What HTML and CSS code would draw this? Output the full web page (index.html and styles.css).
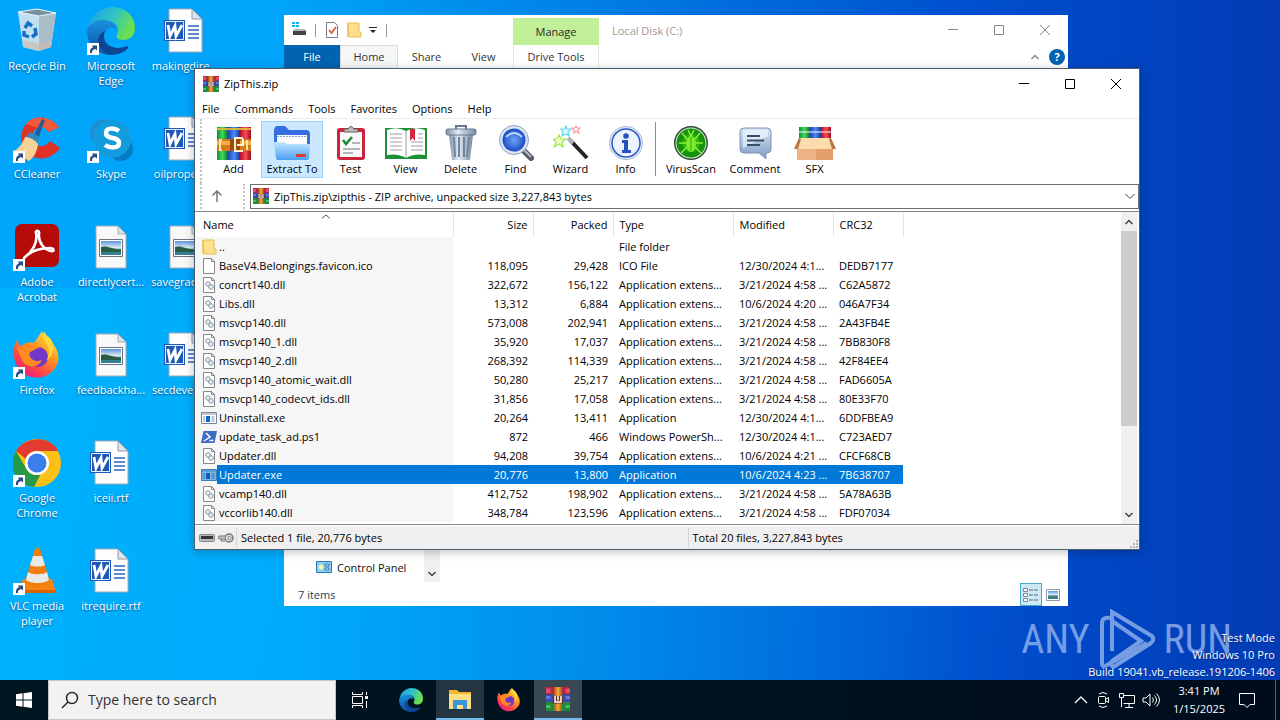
FILE: index.html
```html
<!DOCTYPE html>
<html lang="en">
<head>
<meta charset="utf-8">
<title>Desktop</title>
<link rel="stylesheet" href="styles.css">
</head>
<body>
<svg class="defs" aria-hidden="true">
  <defs>
    <linearGradient id="gEdge" x1="0" y1="0" x2="1" y2=".4"><stop offset="0" stop-color="#1b9de2"/><stop offset=".55" stop-color="#2fc2c9"/><stop offset="1" stop-color="#6be04f"/></linearGradient>
    <linearGradient id="gEdge2" x1="0" y1="0" x2="0" y2="1"><stop offset="0" stop-color="#1b90de"/><stop offset="1" stop-color="#0c4fa4"/></linearGradient>
    <linearGradient id="gFox" x1=".9" y1="0" x2=".2" y2="1"><stop offset="0" stop-color="#fff04a"/><stop offset=".4" stop-color="#ff9a1e"/><stop offset=".75" stop-color="#ff3f4a"/><stop offset="1" stop-color="#e8178c"/></linearGradient>
    <linearGradient id="gFold" x1="0" y1="0" x2="0" y2="1"><stop offset="0" stop-color="#c4e7ff"/><stop offset="1" stop-color="#4b9ff2"/></linearGradient>
    <linearGradient id="gSky" x1="0" y1="0" x2="0" y2="1"><stop offset="0" stop-color="#5d93dd"/><stop offset=".5" stop-color="#e4f1f5"/><stop offset=".6" stop-color="#49806a"/><stop offset="1" stop-color="#2f7fa8"/></linearGradient>
    <linearGradient id="gSteel" x1="0" y1="0" x2="1" y2="0"><stop offset="0" stop-color="#7e93aa"/><stop offset=".4" stop-color="#e3ebf3"/><stop offset="1" stop-color="#7488a0"/></linearGradient>
    <radialGradient id="gLens"><stop offset="0" stop-color="#6ea4f5"/><stop offset="1" stop-color="#1c4bc4"/></radialGradient>
    <linearGradient id="gGreen" x1="0" y1="0" x2="1" y2="0"><stop offset="0" stop-color="#0c9332"/><stop offset=".5" stop-color="#45d860"/><stop offset="1" stop-color="#087428"/></linearGradient>
    <linearGradient id="gBlue" x1="0" y1="0" x2="1" y2="0"><stop offset="0" stop-color="#1944b4"/><stop offset=".5" stop-color="#4f8bf4"/><stop offset="1" stop-color="#15389a"/></linearGradient>
    <linearGradient id="gRed" x1="0" y1="0" x2="1" y2="0"><stop offset="0" stop-color="#b30d28"/><stop offset=".5" stop-color="#fb4a55"/><stop offset="1" stop-color="#9c0a20"/></linearGradient>
    <linearGradient id="gCmt" x1="0" y1="0" x2="0" y2="1"><stop offset="0" stop-color="#d9e6f5"/><stop offset="1" stop-color="#7e9bc4"/></linearGradient>
  </defs>
  <symbol id="link" viewBox="0 0 12 12"><path d="M0 0h12v12H0z" fill="#fff"/><path d="M3 10C2.600 6.500 4 5 6 4.600L5 2.500h5v5L8.300 6.100C6 6.500 4.800 7.500 5 10z" fill="#284c86"/></symbol>
  <symbol id="bin" viewBox="0 0 48 48"><path d="M5 5 24 2l19 4-5 34-13 4-15-4z" fill="#d7e5ee" opacity=".9"/><path d="M26 8 43 6l-5 34-12 4z" fill="#a9bdc9"/><path d="M5 5 24 2l19 4-17 3z" fill="#76909f" stroke="#eef6fb"/><path d="M10 33l16 3 12-3v7l-12 4-16-4z" fill="#c9bdb4" opacity=".7"/><g fill="none" stroke="#1471c9" stroke-width="3.500"><path d="M12 21l3-5 4 3M22 21l1 6-4 3M16 30l-5-2 0-4"/></g></symbol>
  <symbol id="edge" viewBox="0 0 48 48"><path d="M1 22C3 9 12 1 25 0c13 0 23 9 23 21 0 8-5 12-12 12-5 0-8-3-6-6 4-6-2-13-11-13C11 14 4 17 1 22z" fill="url(#gEdge)"/><path d="M0 24C2 16 10 12 18 13c8 1 12 6 11 11-1-5-9-5-11 1-4 10 6 19 20 15 2-1 4-1 3 1-4 5-11 7-18 7C10 47 0 37 0 24z" fill="url(#gEdge2)"/><path d="M18 24c-5 11 5 20 20 16 4-1 4 0 2 2-8 7-20 7-26-1-5-6-3-14 4-17z" fill="#0b4594"/></symbol>
  <symbol id="word" viewBox="0 0 48 48"><path d="M8 2h23l10 10v33H8z" fill="#fdfdfd" stroke="#9fa8b4"/><path d="M31 2v10h10z" fill="#dfe3ea" stroke="#9298a5"/><path d="M27 19h11M27 23h11M27 27h11M27 31h11" stroke="#2a63bd" stroke-width="1.300"/><path d="M3 13h21v21H3z" fill="#1e58b6"/><path d="M4.500 14.500h18v18h-18z" fill="none" stroke="#e7effc"/><path d="m7 18 2 11 5-10 1 10 6-11" fill="none" stroke="#fff" stroke-width="2.800"/></symbol>
  <symbol id="photo" viewBox="0 0 48 48"><path d="M9 3h22l8 8v34H9z" fill="#f8f8f8" stroke="#a3adb5"/><path d="M31 3v8h8z" fill="#dce2e8" stroke="#a3adb5"/><path d="M12.500 16.500h23v17h-23z" fill="#fff" stroke="#697583"/><path d="M14 18h20v14H14z" fill="url(#gSky)"/><path d="M14 24c6-2 11 2 20 3v2H14z" fill="#295c43"/></symbol>
  <symbol id="cc" viewBox="0 0 48 48"><path d="M46 12C38 1 21-1 13 9 5 19 7 36 18 41c10 5 22 2 29-8l-10-7c-3 5-10 7-14 3-5-5-4-14 2-16 4-2 8 0 11 4z" fill="#e03224"/><path d="M46 12C38 1 21-1 13 9l12 4c4-2 8 0 11 4z" fill="#f0593d"/><path d="m29 4 3 1-7 19-5-2z" fill="#1d5f95"/><path d="m17 17 10 5-3 7-12-6z" fill="#3489be"/><path d="M12 22c5 0 10 3 13 7-1 8-4 13-9 17L0 36c6-2 9-7 12-14z" fill="#f5d296"/></symbol>
  <symbol id="skype" viewBox="0 0 48 48"><circle cx="17" cy="18" r="14" fill="#1c8fd6"/><circle cx="34" cy="34" r="12" fill="#087cc2"/><circle cx="25" cy="24" r="19" fill="#129cdd"/><path d="M32 16c-4-3-13-4-13 2 0 7 13 3 13 10 0 6-10 5-14 2" fill="none" stroke="#fff" stroke-width="4.500"/></symbol>
  <symbol id="pdf" viewBox="0 0 48 48"><rect x="2" y="1" width="44" height="43" rx="7" fill="#b50b08"/><path d="M12 34c7-5 13-14 11-24-1-3 4-3 3 1-1 9 6 16 12 17 4 1 3-3-1-3-9 0-18 3-24 8-3 2-2 3-1 1z" fill="none" stroke="#fff" stroke-width="2.600"/></symbol>
  <symbol id="fox" viewBox="0 0 48 48"><path d="M4 9l3 6 6-3c3-1 6-1 8 0l8-12c1 6 5 8 7 13l2-3c8 9 10 19 4 27-6 10-22 13-32 5C0 33-2 19 4 9z" fill="url(#gFox)"/><circle cx="25" cy="26" r="10" fill="#7038c8"/><path d="M4 17c8-4 19-4 23 0-5 0-6 3-10 4-2 6 4 11 12 8-4 9-17 8-20 0-1-4-3-7-5-12z" fill="#ff8a22"/><path d="M31 0c-3 7 1 11 3 14 4 6 1 13-1 16 9-7 9-17 4-23-3-2-5-4-6-7z" fill="#ffd83a"/></symbol>
  <symbol id="chrome" viewBox="0 0 48 48"><circle cx="24" cy="24" r="24" fill="#fbc116"/><path d="M3 12C11-2 37-5 45 12H24a12 12 0 0 0-11 8z" fill="#e33b2e"/><path d="M3 12 13.500 30c3 6 9 7 14 5.500L21 48C3 46-6 27 3 12z" fill="#269a48"/><circle cx="24" cy="24" r="12" fill="#fff"/><circle cx="24" cy="24" r="9.500" fill="#3b7ded"/></symbol>
  <symbol id="vlc" viewBox="0 0 48 48"><path d="M10 32h29l4 13q0 1-2 1H8q-2 0-2-1z" fill="#f58212"/><path d="M6 43h37v3H6z" fill="#d96300"/><path d="M22 2q2-3 5 0l10 33c-2 6-23 6-25 0z" fill="#f27d0d"/><path d="m20 9 9 0 3 9c-3 2-12 2-15 0zM15 25c4 3 15 3 19 0l2 8c-4 4-19 4-23 0z" fill="#e9e9ea"/></symbol>
  <symbol id="rar" viewBox="0 0 16 16"><path d="M0 0h16v5H0z" fill="#b32645"/><path d="M0 5h16v5H0z" fill="#3b4bb0"/><path d="M0 10h16v6H0z" fill="#1f8a3f"/><path d="M0 1h3v3H0zM13 1h3v3h-3z" fill="#df4d60"/><path d="M0 6h3v2H0zM13 6h3v2h-3z" fill="#6378e0"/><path d="M0 12h3v2H0zM13 12h3v2h-3z" fill="#46bb61"/><path d="M5.500 0h5v16h-5z" fill="#c8741d"/><path d="M7 0h2v16H7z" fill="#e9a03b"/><path d="M4.500 6h7v5h-7z" fill="#6d3515"/><path d="M6 6v4h4V6M8 6v3" fill="none" stroke="#fff"/></symbol>
  <symbol id="books" viewBox="0 0 36 36"><path d="M1 2h11v33H1z" fill="url(#gGreen)"/><path d="M12 2h12v33H12z" fill="url(#gBlue)"/><path d="M24 2h11v33H24z" fill="url(#gRed)"/><path d="M1 3h11v2H1zM12 3h12v2H12zM24 3h11v2H24z" fill="#e9b93c" opacity=".9"/><path d="M1 14h34v12H1z" fill="#d37b17"/><path d="M1 16h34v4H1z" fill="#f3af45"/><path d="M6 15H4v10h2M31 15v10" fill="none" stroke="#ffe5a0" stroke-width="2"/><path d="M14 14h10v12H14z" fill="#9c4b10"/><path d="M27 13h-8v13h8M21 20h6v-6" fill="none" stroke="#fff1c9" stroke-width="2"/></symbol>
  <symbol id="extract" viewBox="0 0 36 36"><path d="M0 6q0-5 4-5h7l4 4h17q4 0 4 4v10H0z" fill="#356ee0"/><path d="M3 10h30v12H3z" fill="#fff"/><path d="M3 11.500h30" stroke="#8aa3c4" stroke-dasharray="2 1"/><path d="M0 17h10l3 2h23l-1 14q0 2-3 2H5q-3 0-3-2z" fill="url(#gFold)"/><path d="M22 29h10v3H22z" fill="#e23a36"/></symbol>
  <symbol id="test" viewBox="0 0 36 36"><rect x="4" y="3" width="28" height="32" rx="3" fill="#ce243b"/><path d="M7 7h22v25H7z" fill="#fafafa"/><path d="M11 7V4h4q3-5 6 0h4v3z" fill="#bcbcbf" stroke="#625b5d"/><path d="m10 15 3 4 6-7" fill="none" stroke="#19883a" stroke-width="2.500"/><path d="M19 18h8M10 24h17M10 28h10" stroke="#9e9ea5" stroke-width="1.500"/></symbol>
  <symbol id="view" viewBox="0 0 42 36"><path d="M0 3h42v31H0z" fill="#1f8f35"/><path d="M2 5q10-4 19 1 9-5 19-1v25q-11-2-19 3-8-5-19-3z" fill="#fff"/><path d="M21 6v27M5 9h12M5 13h12M5 17h12M5 21h12M5 25h12M26 17h12M26 21h12M26 25h12M33 9h5M33 13h5" stroke="#9c9c9c"/><path d="M25 4h5v12l-2.500-3L25 16z" fill="#d4293c"/></symbol>
  <symbol id="trash" viewBox="0 0 36 36"><path d="M6 10h24l-3 25H9z" fill="url(#gSteel)"/><path d="m11 12 1 20M16 12v20M21 12v20M26 12l-2 20" stroke="#71869e" stroke-width="2"/><rect x="3" y="4" width="30" height="6" rx="2" fill="url(#gSteel)" stroke="#65778e"/><path d="M13 4V1h10v3" fill="none" stroke="#65778e" stroke-width="2"/></symbol>
  <symbol id="find" viewBox="0 0 36 36"><path d="m24 24 9 9" stroke="#555b65" stroke-width="6" stroke-linecap="round"/><path d="m25 24 8 8" stroke="#b5bac3" stroke-width="2"/><circle cx="16" cy="15" r="14.500" fill="#dce5f3" stroke="#91a3c2"/><circle cx="16" cy="15" r="11.500" fill="url(#gLens)"/><path d="M8 12q8-8 16 0" stroke="#b8d4ff" fill="none" stroke-width="2"/></symbol>
  <symbol id="wizard" viewBox="0 0 36 36"><path d="m18 16 16 17" stroke="#24242a" stroke-width="4"/><path d="m15 13 5 5" stroke="#b1afb8" stroke-width="4"/><g fill="#e9fbff" stroke-width="1.200"><path d="m13 1 1 3 4 0-3 3 1 4-3-2-4 2 1-4-2-3 4 0z" stroke="#5fd9ef"/><path d="m23 1 1 2 3 0-2 2 1 3-3-2-2 2 0-3-2-2 3 0z" fill="#fff" stroke="#ff9aa2"/><path d="m6 10 2 4 5 0-4 3 1 5-4-3-5 3 2-5-3-3 4 0z" fill="#efffd0" stroke="#a3e645"/></g></symbol>
  <symbol id="info" viewBox="0 0 36 36"><circle cx="18" cy="18" r="16.500" fill="#dce8fb" stroke="#aebcdb"/><circle cx="18" cy="18" r="14" fill="#edf4ff" stroke="#2e5dc0" stroke-width="1.500"/><circle cx="18" cy="11" r="2.800" fill="#2452bd"/><path d="M14 15h6v10h3v3h-9v-3h2v-7h-2z" fill="#2452bd"/></symbol>
  <symbol id="virus" viewBox="0 0 36 36"><circle cx="18" cy="18" r="17" fill="#2c4d30"/><circle cx="18" cy="18" r="15.500" fill="#dceade"/><circle cx="18" cy="18" r="14.500" fill="#17920c"/><circle cx="18" cy="18" r="9" fill="#28b410"/><g stroke="#8cee3a" fill="none" stroke-width="1.500"><path d="m9 8 5 6M27 8l-5 6M6 18h24M8 28l6-6M28 28l-6-6M15 5l3 6 3-6"/></g><ellipse cx="18" cy="19" rx="5" ry="8" fill="#7dec29"/><path d="M18 12v14" stroke="#35a919"/></symbol>
  <symbol id="comment" viewBox="0 0 36 36"><path d="M7 3h23q4 0 4 4v17q0 4-4 4h-1v6l-7-6H7q-4 0-4-4V7q0-4 4-4z" fill="url(#gCmt)" stroke="#7c93b5"/><path d="M6 7q0-2 2-2h21q2 0 2 2v4L6 23z" fill="#edf5ff" opacity=".7"/><path d="M10 11h13M10 15.500h17M10 20h13" stroke="#3c4c64" stroke-width="1.800"/></symbol>
  <symbol id="sfx" viewBox="0 0 42 36"><path d="M5 2h11v16H5z" fill="url(#gGreen)"/><path d="M16 2h11v16H16z" fill="url(#gBlue)"/><path d="M27 2h10v16H27z" fill="url(#gRed)"/><path d="M5 6h32v2H5z" fill="#fff" opacity=".5"/><path d="M3 17h36v18H3z" fill="#eeb385"/><path d="M22 17h17v18H22z" fill="#e39f6c"/><path d="M5 13h32l5 11H0z" fill="#fadcae"/><path d="M5 13 0 24h4l3-10M37 13l5 11h-4l-3-10" fill="#ba7644"/></symbol>
  <symbol id="folder" viewBox="0 0 16 16"><path d="M1 1h12v14H1z" fill="#f6cf69"/><path d="M2 1h11v9h2v5H3z" fill="#ffe08a" stroke="#e7bd55"/></symbol>
  <symbol id="file" viewBox="0 0 16 16"><path d="M2.500.5h8l3 3v12h-11z" fill="#fff" stroke="#83888c"/><path d="M10.500.5v3h3" fill="none" stroke="#83888c"/></symbol>
  <symbol id="dll" viewBox="0 0 16 16"><use href="#file"/><circle cx="7" cy="7" r="2.300" fill="#e9edf0" stroke="#8d989e"/><circle cx="10" cy="10" r="2.300" fill="#e9edf0" stroke="#8398a5"/></symbol>
  <symbol id="exe" viewBox="0 0 16 16"><path d="M.5 2.500h15v11H.5z" fill="#fff" stroke="#7a8796"/><path d="M1 3h14v2H1z" fill="#c0cad4"/><path d="M5 6h4v6H5z" fill="#1268c5"/><path d="M10.500 7h3M10.500 9h3M10.500 11h3M2 7h2M2 9h2M2 11h2" stroke="#6b94bc"/></symbol>
  <symbol id="exe-on" viewBox="0 0 16 16"><path d="M.5 2.500h15v11H.5z" fill="#7db4e4" stroke="#3b7db8"/><path d="M1 3h14v2H1z" fill="#5f9fd4"/><path d="M5 6h4v6H5z" fill="#0c5fb8"/><path d="M10.500 7h3M10.500 9h3M10.500 11h3M2 7h2M2 9h2M2 11h2" stroke="#2f78bb"/></symbol>
  <symbol id="ps1" viewBox="0 0 16 16"><path d="M2.500 2H16l-2.500 12H0z" fill="#3f6cc5"/><path d="m5 4 4 4-6 4M8.500 11.500h4" fill="none" stroke="#fff" stroke-width="1.500"/></symbol>
  <symbol id="min" viewBox="0 0 12 12"><path d="M1 5.500h10" stroke="currentColor"/></symbol>
  <symbol id="max" viewBox="0 0 12 12"><path d="M1.500 1.500h9v9h-9z" fill="none" stroke="currentColor"/></symbol>
  <symbol id="close" viewBox="0 0 12 12"><path d="m1 1 10 10M11 1 1 11" stroke="currentColor"/></symbol>
  <symbol id="up" viewBox="0 0 10 10"><path d="m1.500 7 3.500-3.500L8.500 7" fill="none" stroke="currentColor" stroke-width="1.500"/></symbol>
  <symbol id="down" viewBox="0 0 10 10"><path d="m1.500 3 3.500 3.500L8.500 3" fill="none" stroke="currentColor" stroke-width="1.500"/></symbol>
</svg>

<main class="desktop">
  <div class="shortcuts">
    <button class="shortcut"><svg class="pic"><use href="#bin"/></svg><span>Recycle Bin</span></button>
    <button class="shortcut"><svg class="pic"><use href="#cc"/></svg><svg class="link"><use href="#link"/></svg><span>CCleaner</span></button>
    <button class="shortcut"><svg class="pic"><use href="#pdf"/></svg><svg class="link"><use href="#link"/></svg><span>Adobe<br>Acrobat</span></button>
    <button class="shortcut"><svg class="pic"><use href="#fox"/></svg><svg class="link"><use href="#link"/></svg><span>Firefox</span></button>
    <button class="shortcut"><svg class="pic"><use href="#chrome"/></svg><svg class="link"><use href="#link"/></svg><span>Google<br>Chrome</span></button>
    <button class="shortcut"><svg class="pic"><use href="#vlc"/></svg><svg class="link"><use href="#link"/></svg><span>VLC media<br>player</span></button>
    <button class="shortcut"><svg class="pic"><use href="#edge"/></svg><svg class="link"><use href="#link"/></svg><span>Microsoft<br>Edge</span></button>
    <button class="shortcut"><svg class="pic"><use href="#skype"/></svg><svg class="link"><use href="#link"/></svg><span>Skype</span></button>
    <button class="shortcut"><svg class="pic"><use href="#photo"/></svg><span>directlycert...</span></button>
    <button class="shortcut"><svg class="pic"><use href="#photo"/></svg><span>feedbackha...</span></button>
    <button class="shortcut"><svg class="pic"><use href="#word"/></svg><span>iceii.rtf</span></button>
    <button class="shortcut"><svg class="pic"><use href="#word"/></svg><span>itrequire.rtf</span></button>
    <button class="shortcut"><svg class="pic"><use href="#word"/></svg><span>makingdire...</span></button>
    <button class="shortcut"><svg class="pic"><use href="#word"/></svg><span>oilproper.rtf</span></button>
    <button class="shortcut"><svg class="pic"><use href="#photo"/></svg><span>savegradua...</span></button>
    <button class="shortcut"><svg class="pic"><use href="#word"/></svg><span>secdevelop...</span></button>
  </div>

  <div class="brand">
    <span>ANY</span>
    <svg class="brand-mark" viewBox="0 0 58 62" fill="none" stroke="#9dbbee" stroke-width="4"><path d="M12 9Q4 8 4 14v40q0 5 5 2l40-22"/><path d="M14 42V3l40 24q3 4-1 7L17 57q-5 2-3-5l29-20-29-20"/></svg>
    <span>RUN</span>
  </div>
  <div class="build"><p>Test Mode</p><p>Windows 10 Pro</p><p>Build 19041.vb_release.191206-1406</p></div>

  <section class="window explorer">
    <header class="ex-head">
      <div class="quick">
        <svg class="i16" viewBox="0 0 16 16"><path d="M1 0h3v2H1zM5 0h3v2H5zM1 3h3v2H1zM5 3h3v2H5z" fill="#18b0e8"/><path d="m2 9 2-2h9l2 2v4H2z" fill="#414447"/><path d="m2 9 2-2h9l2 2z" fill="#b4b8ba"/></svg>
        <i class="bar"></i>
        <svg class="i16" viewBox="0 0 16 16"><path d="M2.500.5h8l3 3v12h-11z" fill="#fff" stroke="#71808c"/><path d="m5 8 2.500 3L12 5" fill="none" stroke="#e15a31" stroke-width="1.800"/></svg>
        <svg class="i16"><use href="#folder"/></svg>
        <svg class="caret" viewBox="0 0 8 8"><path d="M0 1h8v1H0zM1 4h6L4 7z" fill="#222"/></svg>
        <i class="bar"></i>
      </div>
      <div class="manage">Manage</div>
      <h1 class="ex-title">Local Disk (C:)</h1>
      <div class="controls"><button aria-label="Minimize"><svg><use href="#min"/></svg></button><button aria-label="Maximize"><svg><use href="#max"/></svg></button><button aria-label="Close"><svg><use href="#close"/></svg></button></div>
    </header>
    <nav class="tabs">
      <button class="tab file">File</button><button class="tab home">Home</button><button class="tab">Share</button><button class="tab">View</button><button class="tab drive">Drive Tools</button>
      <span class="grow"></span>
      <svg class="i10"><use href="#up"/></svg><button class="help" aria-label="Help">?</button>
    </nav>
    <div class="ex-body">
      <div class="tree"><a class="tree-item" href="#"><svg class="i16" viewBox="0 0 16 16"><path d="M.5 2.500h15v11H.5z" fill="#89d0f4" stroke="#2d7bad"/><circle cx="5" cy="8" r="2.500" fill="#f1f6a9"/><path d="M9 5h4v2H9zM9 9h4v2H9z" fill="#e9faff" stroke="#2d7bad"/></svg>Control Panel</a></div>
      <div class="tree-scroll"><svg class="i10"><use href="#down"/></svg></div>
    </div>
    <footer class="ex-status"><span>7 items</span><span class="grow"></span>
      <button class="mode on" aria-label="Details"><svg class="i16" viewBox="0 0 16 16"><path d="M.5 1.500h4v3h-4zM.5 6.500h4v3h-4zM.5 11.500h4v3h-4z" fill="#fff" stroke="#7c8990"/><path d="M6 3h4M6 8h4M6 13h4M11 3h4M11 8h4M11 13h4" stroke="#526a78"/></svg></button>
      <button class="mode" aria-label="Thumbnails"><svg class="i14" viewBox="0 0 14 14"><path d="M.5 1.500h13v11H.5z" fill="#fff" stroke="#9198a5"/><path d="M2 3h10v8H2z" fill="url(#gSky)"/></svg></button>
    </footer>
  </section>

  <section class="window winrar">
    <header class="title"><svg class="i16"><use href="#rar"/></svg><h2>ZipThis.zip</h2>
      <div class="controls"><button aria-label="Minimize"><svg><use href="#min"/></svg></button><button aria-label="Maximize"><svg><use href="#max"/></svg></button><button aria-label="Close"><svg><use href="#close"/></svg></button></div>
    </header>
    <nav class="menu"><button>File</button><button>Commands</button><button>Tools</button><button>Favorites</button><button>Options</button><button>Help</button></nav>
    <div class="toolbar">
      <button><svg><use href="#books"/></svg>Add</button>
      <button class="picked"><svg><use href="#extract"/></svg>Extract To</button>
      <button><svg><use href="#test"/></svg>Test</button>
      <button><svg class="wide"><use href="#view"/></svg>View</button>
      <button><svg><use href="#trash"/></svg>Delete</button>
      <button><svg><use href="#find"/></svg>Find</button>
      <button><svg><use href="#wizard"/></svg>Wizard</button>
      <button><svg><use href="#info"/></svg>Info</button>
      <i class="split"></i>
      <button class="long"><svg><use href="#virus"/></svg>VirusScan</button>
      <button class="long"><svg><use href="#comment"/></svg>Comment</button>
      <button><svg class="wide"><use href="#sfx"/></svg>SFX</button>
    </div>
    <div class="address">
      <button class="go-up" aria-label="Up one level"><svg class="i12" viewBox="0 0 12 12"><path d="M6 12V1M1.500 5.500 6 1l4.500 4.500" fill="none" stroke="#777" stroke-width="1.500"/></svg></button>
      <div class="combo"><svg class="i16"><use href="#rar"/></svg><input aria-label="Path" value="ZipThis.zip\zipthis - ZIP archive, unpacked size 3,227,843 bytes"><button aria-label="Show paths"><svg class="i12" viewBox="0 0 12 12"><path d="m1.500 4 4.500 4.500L10.500 4" fill="none" stroke="#444"/></svg></button></div>
    </div>
    <div class="list">
      <div class="rows">
        <table>
          <colgroup><col class="c-name"><col class="c-num"><col class="c-num"><col class="c-type"><col class="c-date"><col class="c-crc"></colgroup>
          <thead><tr><th>Name<svg class="sort i10" viewBox="0 0 10 10"><path d="M1 6.500 5 3l4 3.500" fill="none" stroke="#555"/></svg></th><th class="n">Size</th><th class="n">Packed</th><th>Type</th><th>Modified</th><th>CRC32</th></tr></thead>
          <tbody>
            <tr><td><div><svg><use href="#folder"/></svg><b>..</b></div></td><td></td><td></td><td>File folder</td><td></td><td></td></tr>
            <tr><td><div><svg><use href="#file"/></svg><b>BaseV4.Belongings.favicon.ico</b></div></td><td>118,095</td><td>29,428</td><td>ICO File</td><td>12/30/2024 4:1...</td><td>DEDB7177</td></tr>
            <tr><td><div><svg><use href="#dll"/></svg><b>concrt140.dll</b></div></td><td>322,672</td><td>156,122</td><td>Application extens...</td><td>3/21/2024 4:58 ...</td><td>C62A5872</td></tr>
            <tr><td><div><svg><use href="#dll"/></svg><b>Libs.dll</b></div></td><td>13,312</td><td>6,884</td><td>Application extens...</td><td>10/6/2024 4:20 ...</td><td>046A7F34</td></tr>
            <tr><td><div><svg><use href="#dll"/></svg><b>msvcp140.dll</b></div></td><td>573,008</td><td>202,941</td><td>Application extens...</td><td>3/21/2024 4:58 ...</td><td>2A43FB4E</td></tr>
            <tr><td><div><svg><use href="#dll"/></svg><b>msvcp140_1.dll</b></div></td><td>35,920</td><td>17,037</td><td>Application extens...</td><td>3/21/2024 4:58 ...</td><td>7BB830F8</td></tr>
            <tr><td><div><svg><use href="#dll"/></svg><b>msvcp140_2.dll</b></div></td><td>268,392</td><td>114,339</td><td>Application extens...</td><td>3/21/2024 4:58 ...</td><td>42F84EE4</td></tr>
            <tr><td><div><svg><use href="#dll"/></svg><b>msvcp140_atomic_wait.dll</b></div></td><td>50,280</td><td>25,217</td><td>Application extens...</td><td>3/21/2024 4:58 ...</td><td>FAD6605A</td></tr>
            <tr><td><div><svg><use href="#dll"/></svg><b>msvcp140_codecvt_ids.dll</b></div></td><td>31,856</td><td>17,058</td><td>Application extens...</td><td>3/21/2024 4:58 ...</td><td>80E33F70</td></tr>
            <tr><td><div><svg><use href="#exe"/></svg><b>Uninstall.exe</b></div></td><td>20,264</td><td>13,411</td><td>Application</td><td>12/30/2024 4:1...</td><td>6DDFBEA9</td></tr>
            <tr><td><div><svg><use href="#ps1"/></svg><b>update_task_ad.ps1</b></div></td><td>872</td><td>466</td><td>Windows PowerSh...</td><td>12/30/2024 4:1...</td><td>C723AED7</td></tr>
            <tr><td><div><svg><use href="#dll"/></svg><b>Updater.dll</b></div></td><td>94,208</td><td>39,754</td><td>Application extens...</td><td>10/6/2024 4:21 ...</td><td>CFCF68CB</td></tr>
            <tr class="selected"><td><div><svg><use href="#exe-on"/></svg><b>Updater.exe</b></div></td><td>20,776</td><td>13,800</td><td>Application</td><td>10/6/2024 4:23 ...</td><td>7B638707</td></tr>
            <tr><td><div><svg><use href="#dll"/></svg><b>vcamp140.dll</b></div></td><td>412,752</td><td>198,902</td><td>Application extens...</td><td>3/21/2024 4:58 ...</td><td>5A78A63B</td></tr>
            <tr><td><div><svg><use href="#dll"/></svg><b>vccorlib140.dll</b></div></td><td>348,784</td><td>123,596</td><td>Application extens...</td><td>3/21/2024 4:58 ...</td><td>FDF07034</td></tr>
          </tbody>
        </table>
      </div>
      <div class="scroll"><svg class="i10"><use href="#up"/></svg><div class="track"><div class="thumb"></div></div><svg class="i10"><use href="#down"/></svg></div>
    </div>
    <footer class="status">
      <div class="lamps"><svg class="i16" viewBox="0 0 16 16"><rect x=".5" y="4.500" width="15" height="7" rx="1" fill="#b7bcc0" stroke="#858b90"/><path d="M2 6h12v3H2z" fill="#30373b"/></svg><svg class="i16" viewBox="0 0 16 16"><circle cx="11" cy="8" r="4" fill="#ddd" stroke="#777" stroke-width="1.500"/><circle cx="11.500" cy="8" r="1.500" fill="#fff" stroke="#777"/><path d="M7 6H1L0 8l2 1h5M3 9v2h4" fill="#ccc" stroke="#777"/></svg></div>
      <span>Selected 1 file, 20,776 bytes</span><span>Total 20 files, 3,227,843 bytes</span>
      <svg class="grip" viewBox="0 0 8 8"><path d="M6 0h2v2H6zM3 3h2v2H3zM6 3h2v2H6zM0 6h2v2H0zM3 6h2v2H3zM6 6h2v2H6z" fill="#b5b5b5"/></svg>
    </footer>
  </section>
</main>

<footer class="taskbar">
  <button class="start" aria-label="Start"><svg class="i16" viewBox="0 0 16 16"><path d="m0 2.200 6.500-.9v6.200H0zM7.500 1.200 16 0v7.500H7.500zM0 8.500h6.500v6.200L0 13.800zM7.500 8.500H16V16l-8.500-1.200z" fill="#fff"/></svg></button>
  <label class="search"><svg class="i18" viewBox="0 0 18 18"><circle cx="11" cy="7" r="5.500" fill="none" stroke="#222" stroke-width="1.400"/><path d="m7 11-6 6" stroke="#222" stroke-width="1.400"/></svg><input type="text" placeholder="Type here to search" aria-label="Search"></label>
  <div class="apps">
    <button aria-label="Task View"><svg class="i18" viewBox="0 0 18 18" fill="none" stroke="#fff"><path d="M1.500 1v2.500h10V1M1.500 5.500h10v7h-10zM1.500 17v-2.500h10V17M15.500 1v3M15.500 10v7"/><path d="M14 5h3v3h-3z" fill="#fff" stroke="none"/></svg></button>
    <button aria-label="Edge"><svg class="i24"><use href="#edge"/></svg></button>
    <button class="open" aria-label="File Explorer"><svg class="i24" viewBox="0 0 24 24"><path d="M1 3h8l2 2h12v17H1z" fill="#f3b52f"/><path d="M1 7h22v15H1z" fill="#ffdf83"/><path d="M5 13h14v9h-4v-4H9v4H5z" fill="#3b95d8"/></svg></button>
    <button aria-label="Firefox"><svg class="i24"><use href="#fox"/></svg></button>
    <button class="open" aria-label="WinRAR"><svg class="i24"><use href="#rar"/></svg></button>
  </div>
  <div class="tray">
    <svg class="i14" viewBox="0 0 14 14"><path d="m1 10 6-6 6 6" fill="none" stroke="#fff" stroke-width="1.300"/></svg>
    <svg class="i18" viewBox="0 0 18 18" fill="none" stroke="#fff"><rect x="4.500" y="5.500" width="7" height="7" rx="1"/><path d="m12 8 2.500-1.500v5L12 10M5 3q4-3 8 0M5 15q4 3 8 0"/></svg>
    <svg class="i18" viewBox="0 0 18 18" fill="none" stroke="#fff"><path d="M5 4.500h11.500v8H5.500M11 13v3M7 16.500h8M1.500 2.500h4v4h-4zM3.500 7v9"/></svg>
    <svg class="i18" viewBox="0 0 18 18" fill="none" stroke="#fff"><path d="M1 7h3l4-4v12l-4-4H1zM10.500 6.500q2 2.500 0 5M12.500 4.500q4 4.500 0 9M14.500 2.500q6 6.500 0 13"/></svg>
    <div class="clock"><time>3:41 PM</time><time>1/15/2025</time></div>
    <button class="notes" aria-label="Notifications"><svg class="i18" viewBox="0 0 18 18"><path d="M1.500 2.500h15v11H12l-3 3-3-3H1.500z" fill="none" stroke="#fff"/></svg></button>
  </div>
</footer>
</body>
</html>
```
FILE: styles.css
```css
* { box-sizing: border-box; }
html, body { height: 100%; margin: 0; }
body {
  display: flex;
  flex-direction: column;
  overflow: hidden;
  font: 11px/15px "Open Sans", "Noto Sans", sans-serif;
  color: #000;
  background:
    linear-gradient(100deg, rgba(0, 190, 255, .5) 0%, rgba(0, 170, 250, .35) 45%, rgba(0, 120, 220, 0) 80%) bottom / 100% 60% no-repeat,
    linear-gradient(90deg, #00a6fb 0%, #00a4fa 22%, #0086e8 42%, #006bdb 58%, #004fce 76%, #0046c4 86%, #033bb4 100%);
}
button, input {
  font: inherit;
  color: inherit;
  margin: 0;
  padding: 0;
  border: 0;
  background: none;
}
h1, h2, p { margin: 0; font-size: inherit; font-weight: 400; }
svg { flex: none; display: block; }
.defs { position: absolute; width: 0; height: 0; }
.i10 { width: 10px; height: 10px; }
.i12 { width: 12px; height: 12px; }
.i14 { width: 14px; height: 14px; }
.i16 { width: 16px; height: 16px; }
.i18 { width: 18px; height: 18px; }
.i24 { width: 24px; height: 24px; }
.grow { flex: 1; }

.desktop {
  position: relative;
  flex: 1;
  min-height: 0;
}
.shortcuts {
  display: grid;
  grid-template-rows: repeat(6, 108px);
  grid-auto-columns: 74px;
  grid-auto-flow: column;
  justify-content: start;
}
.shortcut {
  position: relative;
  display: flex;
  flex-direction: column;
  align-items: center;
  justify-content: flex-start;
  gap: 3px;
  padding-top: 7px;
  color: #fff;
  text-shadow: 0 1px 2px rgba(0, 30, 80, .7);
  white-space: nowrap;
}
.shortcut .pic { width: 48px; height: 48px; }
.shortcut .link { position: absolute; left: 13px; top: 43px; width: 12px; height: 12px; }

.brand {
  position: absolute;
  right: 48px;
  bottom: 9px;
  display: flex;
  align-items: center;
  gap: 8px;
  font: 400 40px/60px "Roboto Condensed", "Liberation Sans Narrow", "Open Sans Condensed", Roboto, sans-serif;
  color: #9dbbee;
  opacity: .75;
}
.brand-mark { width: 58px; height: 62px; }
.build {
  position: absolute;
  right: 5px;
  bottom: 0;
  color: #fff;
  line-height: 17px;
  text-align: right;
  text-shadow: 0 1px 1px #002a80;
}

.window { position: absolute; display: flex; flex-direction: column; background: #fff; }
.controls { display: flex; align-self: stretch; }
.controls button { width: 46px; display: grid; place-items: center; }
.controls svg { width: 12px; height: 12px; }

.explorer { left: 284px; right: 212px; top: 15px; bottom: 74px; color: #2b2b2b; }
.ex-head { display: flex; height: 30px; align-items: center; }
.quick { width: 229px; display: flex; align-items: center; gap: 6px; padding-left: 7px; }
.bar { width: 1px; height: 13px; background: #999; margin: 0 2px; }
.caret { width: 8px; height: 8px; margin: 0 1px; }
.manage { align-self: stretch; width: 86px; margin-top: 3px; padding-top: 6px; text-align: center; background: #c1ef97; }
.ex-title { flex: 1; padding-left: 13px; color: #999; }
.ex-head .controls { color: #888; }
.tabs { display: flex; align-items: center; height: 23px; flex: none; padding-right: 3px; color: #333; }
.tab { align-self: stretch; width: 57px; }
.tab.file { width: 56px; background: #0063b1; color: #fff; }
.tab.home { width: 58px; background: #f5f6f7; border: solid #dadbdc; border-width: 0 1px; box-shadow: inset 0 1px #dadbdc; }
.tab.drive { width: 86px; margin-left: 1px; border: solid #e1e7db; border-width: 0 1px; }
.tabs > svg { color: #888; margin-right: 9px; }
.help { width: 16px; height: 16px; border-radius: 50%; background: #0062b3; color: #fff; font-weight: 700; line-height: 16px; }
.ex-body { display: flex; flex: 1; min-height: 0; margin-bottom: 1px; }
.tree { width: 140px; display: flex; flex-direction: column; justify-content: flex-end; padding: 0 0 7px 32px; }
.tree-item { display: flex; align-items: center; gap: 5px; color: #111; text-decoration: none; }
.tree-scroll { width: 16px; display: flex; flex-direction: column; justify-content: flex-end; align-items: center; padding-bottom: 3px; background: #f0f0f0; color: #444; }
.ex-status { display: flex; align-items: center; height: 23px; flex: none; padding: 0 4px 0 14px; color: #1e395b; }
.mode { width: 22px; height: 23px; display: grid; place-items: center; }
.mode.on { background: #cce8f4; border: 1px solid #4aa8c8; }

.winrar { left: 194px; right: 140px; top: 68px; bottom: 130px; border: 1px solid #4c5f70; box-shadow: 0 2px 9px rgba(0, 0, 0, .25); }
.title { display: flex; align-items: center; gap: 5px; height: 29px; flex: none; padding-left: 8px; }
.title h2 { flex: 1; }
.menu { display: flex; align-items: center; gap: 15px; height: 21px; flex: none; padding-left: 7px; border-bottom: 1px solid #ececec; }
.toolbar { display: flex; align-items: flex-start; height: 64px; flex: none; margin-left: 5px; padding: 2px 0 0 4px; border-left: 2px dotted #c4c4c4; }
.toolbar button { display: flex; flex-direction: column; align-items: center; width: 55px; height: 57px; padding-top: 3px; border: 1px solid transparent; white-space: nowrap; line-height: 15px; }
.toolbar button svg { width: 36px; height: 36px; }
.toolbar button svg.wide { width: 42px; }
.toolbar .picked { width: 62px; background: #cce8ff; border-color: #99d1ff; }
.toolbar .long { width: 64px; }
.split { width: 1px; height: 54px; margin: 1px 3px 0 2px; background: #8b8b8b; }
.address { display: flex; align-items: center; height: 26px; flex: none; margin-left: 5px; border-left: 2px dotted #c4c4c4; }
.go-up { width: 43px; height: 25px; padding-left: 9px; border-right: 2px dotted #c4c4c4; }
.combo { flex: 1; display: flex; align-items: center; height: 25px; gap: 5px; margin-left: 5px; padding: 0 2px; border: 1px solid #707070; }
.combo input { flex: 1; min-width: 0; outline: 0; }

.list { flex: 1; min-height: 0; display: flex; margin-top: 2px; padding-right: 2px; border: solid #828790; border-width: 1px 0; }
.rows { flex: 1; min-width: 0; overflow: hidden; }
table { table-layout: fixed; width: 708px; border-collapse: collapse; }
.c-name { width: 258px; }
.c-num { width: 80px; }
.c-type { width: 120px; }
.c-date { width: 100px; }
.c-crc { width: 70px; }
th { position: relative; height: 25px; padding: 0 6px; font-weight: 400; text-align: left; border-right: 1px solid #e5e5e5; }
th:first-child { padding-left: 8px; }
th.n { text-align: right; padding-right: 5px; }
.sort { position: absolute; left: 126px; top: 0; }
td { height: 19px; padding: 0 0 0 6px; white-space: nowrap; }
td:nth-child(2), td:nth-child(3) { text-align: right; padding: 0 5px 0 0; }
td:first-child { background: #f6f6f6; }
td div { display: flex; align-items: center; }
td b { flex: 1; padding-left: 2px; font-weight: 400; line-height: 19px; }
td svg { width: 16px; height: 16px; }
.selected td, .selected b { background: #0078d7; color: #fff; }
.selected td:first-child { background: #f6f6f6; }
.scroll { width: 16px; display: flex; flex-direction: column; align-items: center; gap: 4px; padding: 5px 0 4px; background: #f0f0f0; color: #444; }
.track { flex: 1; width: 100%; }
.thumb { height: 71%; background: #cdcdcd; }

.status { display: grid; grid-template-columns: 41px 1fr 1fr; align-items: center; height: 24px; flex: none; position: relative; background: #f0f0f0; border-top: 1px solid #fff; }
.status span { padding-left: 4px; border-left: 1px solid #d5d5d5; line-height: 20px; }
.lamps { display: flex; gap: 3px; padding-left: 4px; }
.grip { position: absolute; right: 1px; bottom: 1px; width: 8px; height: 8px; }

.taskbar { display: flex; height: 40px; flex: none; color: #fff; background: linear-gradient(90deg, #001620, #00121f 50%, #000c1c); }
.taskbar button { width: 48px; display: grid; place-items: center; }
.search { display: flex; align-items: center; gap: 9px; width: 288px; padding-left: 12px; background: #f2f2f2; border: 1px solid #c5c5c5; }
.search input { flex: 1; min-width: 0; font-size: 14px; line-height: 20px; outline: 0; }
.search input::placeholder { color: #333; opacity: 1; }
.apps { display: flex; gap: 1px; flex: 1; }
.apps button:first-child { margin-right: 2px; }
.taskbar .apps .open { background: #243440; border-bottom: 2px solid #76b9ed; }
.taskbar .apps .open:last-child { background: #3a4852; }
.tray { display: flex; align-items: center; gap: 6px; padding-right: 4px; }
.clock { width: 66px; text-align: center; line-height: 18px; }
.clock time { display: block; }
.taskbar .notes { align-self: stretch; width: 44px; margin-left: -6px; border-right: 1px solid #51606c; padding-right: 13px; }
```
